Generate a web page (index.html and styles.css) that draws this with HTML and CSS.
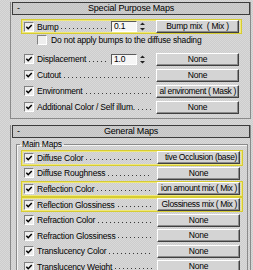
FILE: index.html
```html
<!DOCTYPE html>
<html lang="en">
<head>
    <meta charset="UTF-8">
    <title>Material Maps</title>
    <link rel="stylesheet" href="styles.css">
</head>
<body>
    <div class="panel">

        <div class="rollout">
            <div class="rollout-head"><span class="toggle">-</span><span class="title">Special Purpose Maps</span><span></span></div>
            <div class="rollout-body special">
                <div class="row hl">
                    <span class="check"><svg viewBox="0 0 9 9"><path d="M1.5 4.2 L3.6 6.4 L7.6 2.2"/></svg></span>
                    <span class="label">Bump</span><span class="dots"></span>
                    <span class="spinner"><span class="edit">0.1</span><svg class="arrows" viewBox="0 0 7 11"><path d="M3.5 1.5 L6 4 L1 4 Z M3.5 9.5 L6 7 L1 7 Z"/></svg></span>
                    <span class="map-btn">Bump mix &nbsp;( Mix )</span>
                </div>
                <div class="sub-row">
                    <span class="check off"></span>
                    <span class="sub-label">Do not apply bumps to the diffuse shading</span>
                </div>
                <div class="row gap">
                    <span class="check"><svg viewBox="0 0 9 9"><path d="M1.5 4.2 L3.6 6.4 L7.6 2.2"/></svg></span>
                    <span class="label">Displacement</span><span class="dots"></span>
                    <span class="spinner"><span class="edit">1.0</span><svg class="arrows" viewBox="0 0 7 11"><path d="M3.5 1.5 L6 4 L1 4 Z M3.5 9.5 L6 7 L1 7 Z"/></svg></span>
                    <span class="map-btn">None</span>
                </div>
                <div class="row">
                    <span class="check"><svg viewBox="0 0 9 9"><path d="M1.5 4.2 L3.6 6.4 L7.6 2.2"/></svg></span>
                    <span class="label">Cutout</span><span class="dots"></span>
                    <span class="map-btn">None</span>
                </div>
                <div class="row">
                    <span class="check"><svg viewBox="0 0 9 9"><path d="M1.5 4.2 L3.6 6.4 L7.6 2.2"/></svg></span>
                    <span class="label">Environment</span><span class="dots"></span>
                    <span class="map-btn clip">al enviroment ( Mask )</span>
                </div>
                <div class="row">
                    <span class="check"><svg viewBox="0 0 9 9"><path d="M1.5 4.2 L3.6 6.4 L7.6 2.2"/></svg></span>
                    <span class="label">Additional Color / Self illum.</span><span class="dots"></span>
                    <span class="map-btn">None</span>
                </div>
            </div>
        </div>

        <div class="rollout second">
            <div class="rollout-head"><span class="toggle">-</span><span class="title">General Maps</span><span></span></div>
            <div class="rollout-body general">
                <fieldset class="group">
                    <legend>Main Maps</legend>
                    <div class="row hl">
                        <span class="check"><svg viewBox="0 0 9 9"><path d="M1.5 4.2 L3.6 6.4 L7.6 2.2"/></svg></span>
                        <span class="label">Diffuse Color</span><span class="dots"></span>
                        <span class="map-btn clip">tive Occlusion (base)</span>
                    </div>
                    <div class="row">
                        <span class="check"><svg viewBox="0 0 9 9"><path d="M1.5 4.2 L3.6 6.4 L7.6 2.2"/></svg></span>
                        <span class="label">Diffuse Roughness</span><span class="dots"></span>
                        <span class="map-btn">None</span>
                    </div>
                    <div class="row hl">
                        <span class="check"><svg viewBox="0 0 9 9"><path d="M1.5 4.2 L3.6 6.4 L7.6 2.2"/></svg></span>
                        <span class="label">Reflection Color</span><span class="dots"></span>
                        <span class="map-btn clip">ion amount mix ( Mix )</span>
                    </div>
                    <div class="row hl">
                        <span class="check"><svg viewBox="0 0 9 9"><path d="M1.5 4.2 L3.6 6.4 L7.6 2.2"/></svg></span>
                        <span class="label">Reflection Glossiness</span><span class="dots"></span>
                        <span class="map-btn clip">Glossiness mix ( Mix )</span>
                    </div>
                    <div class="row">
                        <span class="check"><svg viewBox="0 0 9 9"><path d="M1.5 4.2 L3.6 6.4 L7.6 2.2"/></svg></span>
                        <span class="label">Refraction Color</span><span class="dots"></span>
                        <span class="map-btn">None</span>
                    </div>
                    <div class="row">
                        <span class="check"><svg viewBox="0 0 9 9"><path d="M1.5 4.2 L3.6 6.4 L7.6 2.2"/></svg></span>
                        <span class="label">Refraction Glossiness</span><span class="dots"></span>
                        <span class="map-btn">None</span>
                    </div>
                    <div class="row">
                        <span class="check"><svg viewBox="0 0 9 9"><path d="M1.5 4.2 L3.6 6.4 L7.6 2.2"/></svg></span>
                        <span class="label">Translucency Color</span><span class="dots"></span>
                        <span class="map-btn">None</span>
                    </div>
                    <div class="row">
                        <span class="check"><svg viewBox="0 0 9 9"><path d="M1.5 4.2 L3.6 6.4 L7.6 2.2"/></svg></span>
                        <span class="label">Translucency Weight</span><span class="dots"></span>
                        <span class="map-btn">None</span>
                    </div>
                </fieldset>
            </div>
        </div>

    </div>
</body>
</html>
```

FILE: styles.css
```css
body {
    margin: 0;
    height: 270px;
    overflow: hidden;
    font-family: "Liberation Sans", Arial, sans-serif;
    font-size: 8.5px;
    letter-spacing: -0.2px;
    color: #000;
    background: repeating-conic-gradient(#cdcdcd 0 25%, #d9d9d9 0 50%) 0 0 / 2px 2px;
}

.panel {
    padding: 2px 2px 0 10px;
}

.rollout {
    border-left: 1px solid #8a8a8a;
    border-right: 1px solid #8a8a8a;
    border-bottom: 1px solid #8a8a8a;
}

.rollout.second {
    margin-top: 6px;
    border-bottom: none;
}

.rollout-head {
    height: 11px;
    margin-left: 1px;
    border: 1px solid #3c3c3c;
    background: repeating-conic-gradient(#c4c4c4 0 25%, #cecece 0 50%) 0 0 / 2px 2px;
    display: grid;
    grid-template-columns: 1fr auto 1fr;
    align-items: center;
    line-height: 11px;
    font-size: 9px;
}

.rollout-head .toggle {
    padding-left: 4px;
}

.rollout-body.special {
    padding: 4px 0 3px 0;
}

.rollout-body.general {
    padding: 1px 0 0 0;
}

/* map rows */
.row {
    height: 16px;
    margin: 0 8px 0 10px;
    box-sizing: border-box;
    border: 2px solid transparent;
    padding: 0 1px;
    display: flex;
    align-items: center;
}

.row.hl {
    border: 1px solid #d6cc32;
    box-shadow: inset 0 0 0 1px #f0e87a;
    padding: 0 2px;
}

.special .row.hl {
    height: 15px;
}

.row.gap {
    margin-top: 6px;
}

.check {
    width: 8px;
    height: 8px;
    flex: none;
    border: 1px solid;
    border-color: #808080 #ffffff #ffffff #808080;
    background: #eeeeee;
    display: flex;
}

.check svg {
    width: 8px;
    height: 8px;
}

.check path {
    fill: none;
    stroke: #000;
    stroke-width: 1.7;
}

.label {
    margin-left: 3px;
    white-space: nowrap;
    line-height: 12px;
}

/* dotted leader between label and control */
.dots {
    flex: 1;
    height: 1px;
    align-self: center;
    margin: 4px 5px 0 3px;
    background: linear-gradient(to right, #3a3a3a 1px, transparent 1px) 0 0 / 4px 1px repeat-x;
}

.sub-row {
    height: 11px;
    margin-left: 26px;
    display: flex;
    align-items: center;
}

.sub-label {
    margin-left: 4px;
    white-space: nowrap;
}

.spinner {
    display: flex;
    align-items: center;
    margin-right: 10px;
}

.spinner .edit {
    width: 22px;
    height: 9px;
    padding-left: 2px;
    border: 1px solid;
    border-color: #5a5a5a #ffffff #ffffff #5a5a5a;
    background: #f6f6f6;
    line-height: 9px;
}

.spinner .arrows {
    width: 7px;
    height: 11px;
    margin-left: 2px;
    fill: #222;
}

.map-btn {
    width: 81px;
    height: 11px;
    flex: none;
    border: 1px solid;
    border-color: #ffffff #404040 #404040 #ffffff;
    box-shadow: inset -1px -1px 0 #8c8c8c;
    background: #d4d4d4;
    display: flex;
    justify-content: center;
    align-items: center;
    overflow: hidden;
    white-space: nowrap;
    line-height: 11px;
}

.map-btn.clip {
    justify-content: flex-end;
    padding-right: 2px;
    width: 79px;
    letter-spacing: -0.35px;
}

/* group box */
.group {
    margin: 0 2px 0 5px;
    padding: 1px 0 0 0;
    min-width: 0;
    border: 1px solid #8a8a8a;
    box-shadow: inset 1px 1px 0 #f4f4f4;
}

.group legend {
    margin-left: 3px;
    padding: 0 2px;
    line-height: 10px;
}

.group .row {
    height: 15.6px;
    margin: 0 4px 0 4px;
}
```
